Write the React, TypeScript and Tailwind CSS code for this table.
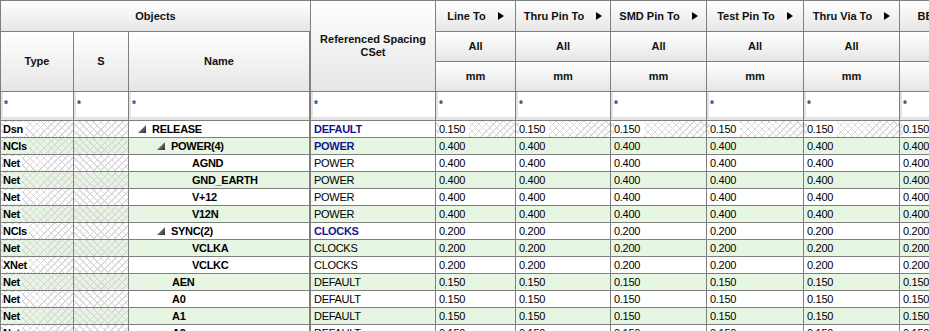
import React from "react";

type Row = {
  type: string;
  level: number;
  tri: boolean;
  name: string;
  ref: string;
  refBold: boolean;
  val: string;
  hatchVals?: boolean;
};

const rows: Row[] = [
  { type: "Dsn", level: 0, tri: true, name: "RELEASE", ref: "DEFAULT", refBold: true, val: "0.150", hatchVals: true },
  { type: "NCls", level: 1, tri: true, name: "POWER(4)", ref: "POWER", refBold: true, val: "0.400" },
  { type: "Net", level: 2, tri: false, name: "AGND", ref: "POWER", refBold: false, val: "0.400" },
  { type: "Net", level: 2, tri: false, name: "GND_EARTH", ref: "POWER", refBold: false, val: "0.400" },
  { type: "Net", level: 2, tri: false, name: "V+12", ref: "POWER", refBold: false, val: "0.400" },
  { type: "Net", level: 2, tri: false, name: "V12N", ref: "POWER", refBold: false, val: "0.400" },
  { type: "NCls", level: 1, tri: true, name: "SYNC(2)", ref: "CLOCKS", refBold: true, val: "0.200" },
  { type: "Net", level: 2, tri: false, name: "VCLKA", ref: "CLOCKS", refBold: false, val: "0.200" },
  { type: "XNet", level: 2, tri: false, name: "VCLKC", ref: "CLOCKS", refBold: false, val: "0.200" },
  { type: "Net", level: 1, tri: false, name: "AEN", ref: "DEFAULT", refBold: false, val: "0.150" },
  { type: "Net", level: 1, tri: false, name: "A0", ref: "DEFAULT", refBold: false, val: "0.150" },
  { type: "Net", level: 1, tri: false, name: "A1", ref: "DEFAULT", refBold: false, val: "0.150" },
  { type: "Net", level: 1, tri: false, name: "A2", ref: "DEFAULT", refBold: false, val: "0.150" },
];

const dataCols = ["Line To", "Thru Pin To", "SMD Pin To", "Test Pin To", "Thru Via To", "BB Via To"];

const LINE = "border-r border-b border-[#7f7f7f]";
const LINE2 = "border-r-2 border-b border-[#7f7f7f]";
const HEAD =
  "bg-linear-to-b from-white to-[#e6e6e6] flex items-center justify-center text-center font-bold text-[11px] leading-[13px] text-[#111]";
const HATCH =
  "bg-[image:repeating-linear-gradient(45deg,transparent_0_4px,#dadada_4px_5px),repeating-linear-gradient(-45deg,transparent_0_4px,#dadada_4px_5px)]";

const nameIndent: Record<string, string> = {
  "0t": "pl-[9px]",
  "1t": "pl-[28px]",
  "1n": "pl-[43px]",
  "2n": "pl-[63px]",
  "0n": "pl-[23px]",
  "2t": "pl-[48px]",
};

function Arrow() {
  return (
    <svg width="6" height="10" viewBox="0 0 6 10" className="shrink-0">
      <polygon points="0,1 6,5 0,9" fill="#000" />
    </svg>
  );
}

function Tri() {
  return (
    <svg width="8" height="8" viewBox="0 0 8 8" className="shrink-0 mr-[6px]">
      <defs>
        <linearGradient id="tg" x1="0" y1="0" x2="1" y2="1">
          <stop offset="0" stopColor="#9a9a9a" />
          <stop offset="1" stopColor="#303030" />
        </linearGradient>
      </defs>
      <polygon points="8,0 8,8 0,8" fill="url(#tg)" />
    </svg>
  );
}

export default function App() {
  return (
    <div className="w-[929px] h-[331px] overflow-hidden bg-white [font-family:'Liberation_Sans',Arial,sans-serif]">
      <div className="grid grid-cols-[73px_55px_182px_125px_80px_95px_96px_97px_96px_105px] grid-rows-[31px_30px_30px_29px] auto-rows-[17px] w-max border-t border-l border-[#7f7f7f]">
        {/* header row 1 */}
        <div className={`${LINE} ${HEAD} col-span-3`}>Objects</div>
        <div className={`${LINE} ${HEAD} row-span-3 col-start-4`}>
          <span>
            Referenced Spacing
            <br />
            CSet
          </span>
        </div>
        {dataCols.map((c) => (
          <div key={c} className={`${LINE} ${HEAD} gap-[12px] whitespace-nowrap`}>
            <span>{c}</span>
            <Arrow />
          </div>
        ))}
        {/* header row 2 */}
        <div className={`${LINE} ${HEAD} row-span-2 col-start-1`}>Type</div>
        <div className={`${LINE} ${HEAD} row-span-2`}>S</div>
        <div className={`${LINE2} ${HEAD} row-span-2`}>Name</div>
        {dataCols.map((c) => (
          <div key={c + "a"} className={`${LINE} ${HEAD}`}>
            All
          </div>
        ))}
        {/* header row 3 */}
        {dataCols.map((c) => (
          <div key={c + "m"} className={`${LINE} ${HEAD}`}>
            mm
          </div>
        ))}
        {/* filter row */}
        {Array.from({ length: 10 }).map((_, i) => (
          <div key={"f" + i} className={`${i === 2 ? LINE2 : LINE} bg-[#e4e4e4] pl-[2px] pb-[3px]`}>
            <div className="h-full bg-white flex items-center pl-[1px] text-[10px] font-bold text-[#1d3f8a]">*</div>
          </div>
        ))}
        {/* data rows */}
        {rows.map((r, idx) => {
          const green = idx % 2 === 1;
          const bg = green ? "bg-[#e7f5e3]" : "bg-white";
          const key = `${r.level}${r.tri ? "t" : "n"}`;
          return (
            <React.Fragment key={idx}>
              <div className={`${LINE} ${bg} ${HATCH} flex items-center pl-[2px]`}>
                <span className={`${bg} pr-[2px] text-[11px] leading-[14px] font-bold tracking-[-0.3px] text-black`}>
                  {r.type}
                </span>
              </div>
              <div className={`${LINE} ${bg} ${HATCH}`} />
              <div
                className={`${LINE2} ${bg} flex items-center ${nameIndent[key]} text-[11px] font-bold tracking-[-0.3px] text-black whitespace-nowrap`}
              >
                {r.tri && <Tri />}
                <span>{r.name}</span>
              </div>
              <div
                className={`${LINE} ${bg} flex items-center pl-[3px] text-[11px] tracking-[-0.3px] whitespace-nowrap ${
                  r.refBold ? "font-bold text-[#16168f]" : "text-black"
                }`}
              >
                {r.ref}
              </div>
              {dataCols.map((c) => (
                <div
                  key={c}
                  className={`${LINE} ${bg} ${r.hatchVals ? HATCH : ""} flex items-center pl-[3px] text-[11px] tracking-[-0.3px] text-black whitespace-nowrap`}
                >
                  <span className={`${bg} pr-[4px]`}>{r.val}</span>
                </div>
              ))}
            </React.Fragment>
          );
        })}
      </div>
    </div>
  );
}
